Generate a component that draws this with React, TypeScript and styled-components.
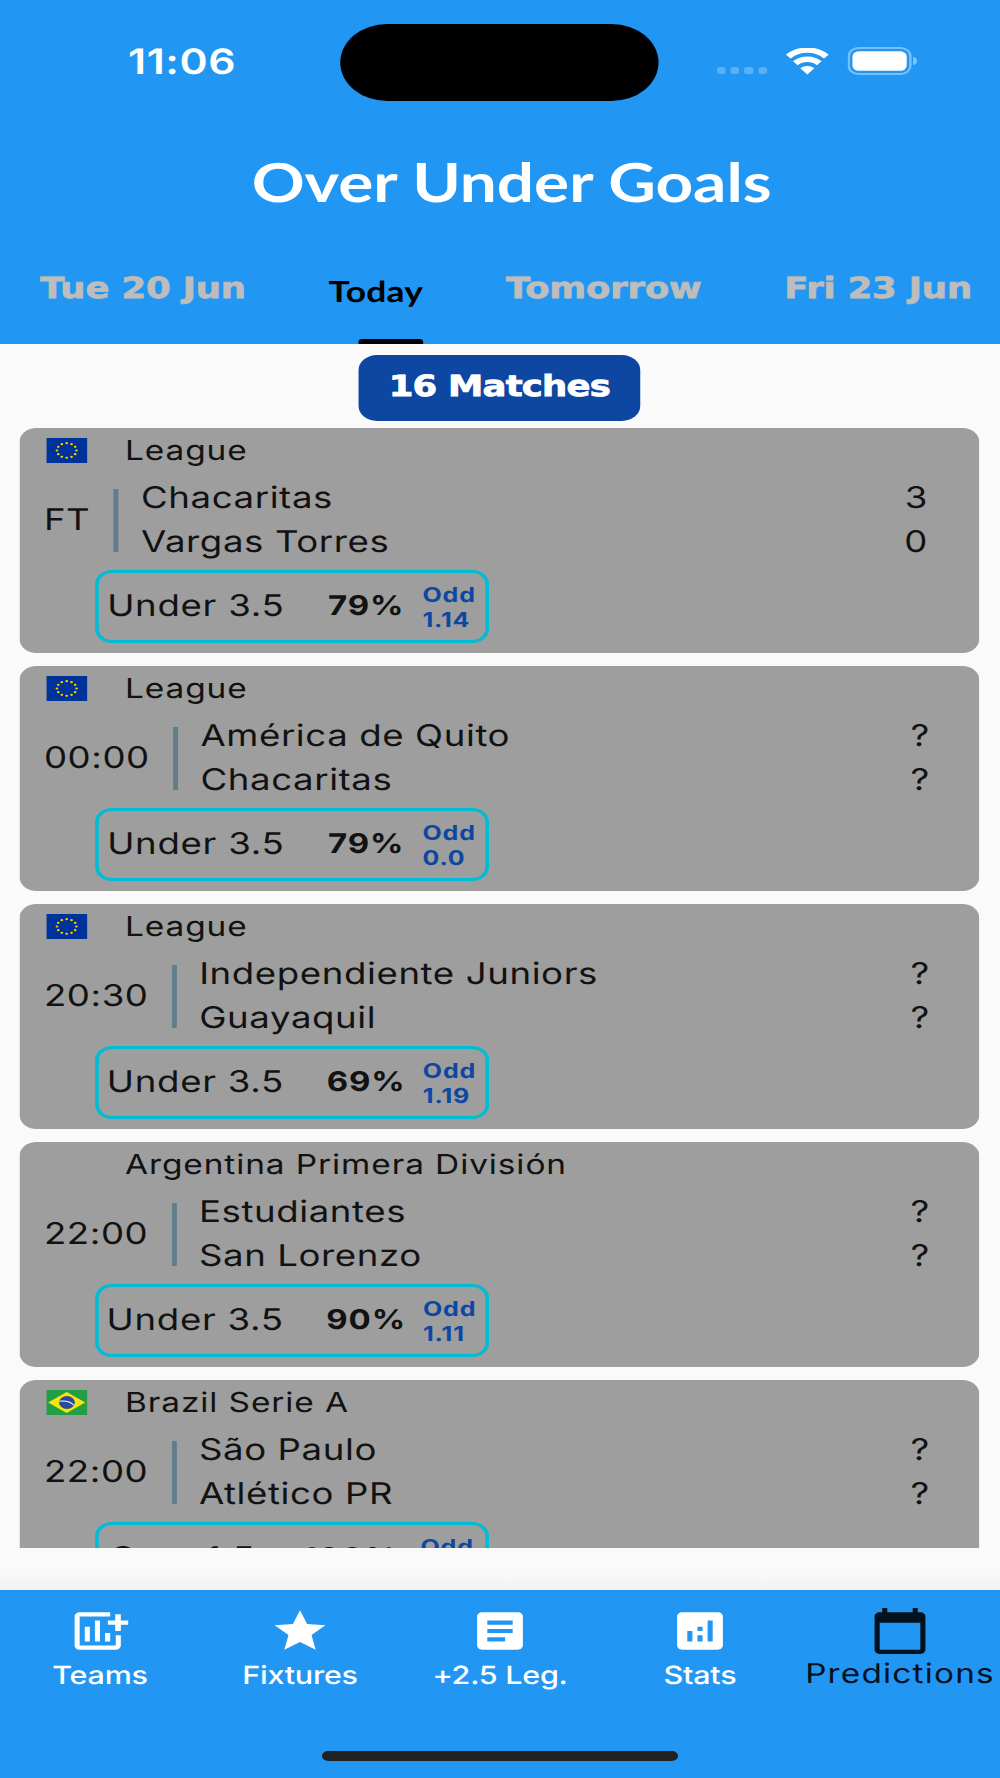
import React from "react"
import styled, { createGlobalStyle } from "styled-components"
import { MdStar, MdArticle, MdAnalytics, MdCalendarToday } from "react-icons/md"

const days = ["Tue 20 Jun", "Today", "Tomorrow", "Fri 23 Jun"]

const matches = [
  {
    flag: "eu",
    league: "League",
    time: "FT",
    home: "Chacaritas",
    away: "Vargas Torres",
    score: ["3", "0"],
    tip: "Under 3.5",
    chance: "79%",
    odd: "1.14",
  },
  {
    flag: "eu",
    league: "League",
    time: "00:00",
    home: "América de Quito",
    away: "Chacaritas",
    score: ["?", "?"],
    tip: "Under 3.5",
    chance: "79%",
    odd: "0.0",
  },
  {
    flag: "eu",
    league: "League",
    time: "20:30",
    home: "Independiente Juniors",
    away: "Guayaquil",
    score: ["?", "?"],
    tip: "Under 3.5",
    chance: "69%",
    odd: "1.19",
  },
  {
    flag: "",
    league: "Argentina Primera División",
    time: "22:00",
    home: "Estudiantes",
    away: "San Lorenzo",
    score: ["?", "?"],
    tip: "Under 3.5",
    chance: "90%",
    odd: "1.11",
  },
  {
    flag: "br",
    league: "Brazil Serie A",
    time: "22:00",
    home: "São Paulo",
    away: "Atlético PR",
    score: ["?", "?"],
    tip: "Over 1.5",
    chance: "100%",
    odd: "1.01",
  },
]

const AddChart = ({ size }: { size: number }) => (
  <svg width={size} height={size} viewBox="0 0 24 24" fill="currentColor">
    <path d="M16 3H4a2 2 0 0 0-2 2v14a2 2 0 0 0 2 2h14.2a2 2 0 0 0 2-2v-5h-2v5H4V5h12z" />
    <path d="M6 10h2v7H6zM10 7h2v10h-2zM14 13h2v4h-2z" />
    <path d="M18 4h2.2v3h2.9v2h-2.9v3H18V9h-2.9V7H18z" />
  </svg>
)

const navItems = [
  { label: "Teams", icon: AddChart },
  { label: "Fixtures", icon: MdStar },
  { label: "+2.5 Leg.", icon: MdArticle },
  { label: "Stats", icon: MdAnalytics },
  { label: "Predictions", icon: MdCalendarToday, active: true },
]

const EuFlag = () => (
  <svg width="33.5" height="25" viewBox="0 0 33.5 25">
    <rect width="33.5" height="25" fill="#039" />
    {Array.from({ length: 12 }, (_, i) => {
      const angle = (i * Math.PI) / 6
      return (
        <circle
          key={i}
          cx={16.7 + 8 * Math.sin(angle)}
          cy={12.5 - 7.3 * Math.cos(angle)}
          r="1.1"
          fill="#fc0"
        />
      )
    })}
  </svg>
)

const BrFlag = () => (
  <svg width="33.5" height="25" viewBox="0 0 33.5 25">
    <rect width="33.5" height="25" fill="#229e45" />
    <path d="M1.5 12.5 16.7 2l15.2 10.5L16.7 23z" fill="#f8e509" />
    <circle cx="16.9" cy="12.5" r="6.5" fill="#2b49a3" />
    <path
      d="M10.8 11.2c4.5-.8 9 .7 12 4"
      fill="none"
      stroke="#ffffef"
      strokeWidth="0.9"
    />
  </svg>
)

const Wifi = () => (
  <svg width="36" height="27" viewBox="0 0 36 27">
    <g fill="none" stroke="#fff">
      <path d="M2.4 8.6a22 22 0 0 1 31.2 0" strokeWidth="5.4" />
      <path d="M8.2 15.2a14 14 0 0 1 19.6 0" strokeWidth="5.4" />
    </g>
    <path d="M12.2 20.2a8.5 8.5 0 0 1 11.6 0L18 26.4z" fill="#fff" />
  </svg>
)

const Battery = () => (
  <svg width="58" height="28" viewBox="0 0 58 28">
    <rect
      x="1"
      y="1"
      width="50.5"
      height="26"
      rx="8"
      fill="none"
      stroke="#fff"
      strokeOpacity="0.4"
      strokeWidth="2"
    />
    <rect x="4" y="4.3" width="44.5" height="19.4" rx="5.2" fill="#fff" />
    <path d="M53.8 9.7q3.2 1.4 3.2 4.3t-3.2 4.3z" fill="#fff" opacity="0.45" />
  </svg>
)

const App = () => (
  <>
    <GlobalStyle />
    <Screen>
      <Header>
        <StatusBar>
          <Clock>11:06</Clock>
          <Island />
          <Indicators>
            <Signal>
              <i />
              <i />
              <i />
              <i />
            </Signal>
            <Wifi />
            <Battery />
          </Indicators>
        </StatusBar>
        <Title>Over Under Goals</Title>
        <Tabs>
          {days.map(day => (
            <Tab key={day} $active={day === "Today"}>
              {day}
            </Tab>
          ))}
        </Tabs>
      </Header>
      <Content>
        <Count>16 Matches</Count>
        <List>
          {matches.map((match, i) => (
            <Card key={i}>
              <League>
                <Flag>
                  {match.flag === "eu" && <EuFlag />}
                  {match.flag === "br" && <BrFlag />}
                </Flag>
                {match.league}
              </League>
              <Game>
                <span>{match.time}</span>
                <Divider />
                <Teams>
                  <p>{match.home}</p>
                  <p>{match.away}</p>
                </Teams>
                <Score $open={match.score[0] === "?"}>
                  <p>{match.score[0]}</p>
                  <p>{match.score[1]}</p>
                </Score>
              </Game>
              <Prediction>
                <Tip>{match.tip}</Tip>
                <Chance>{match.chance}</Chance>
                <Odd>
                  <p>Odd</p>
                  <p>{match.odd}</p>
                </Odd>
              </Prediction>
            </Card>
          ))}
        </List>
      </Content>
      <BottomBar>
        <Nav>
          {navItems.map(({ label, icon: Icon, active }) => (
            <NavItem key={label} $active={active}>
              <Icon size={50} />
              <span>{label}</span>
            </NavItem>
          ))}
        </Nav>
        <HomeIndicator />
      </BottomBar>
    </Screen>
  </>
)

const GlobalStyle = createGlobalStyle`
  * {
    box-sizing: border-box;
    margin: 0;
    padding: 0;
  }
  body {
    width: 1000px;
    height: 1778px;
    overflow: hidden;
    background: #fafafa;
  }
`

/* 820 wide phone layout, widened to fill the 1000px page */
const Screen = styled.div`
  width: 820px;
  height: 1778px;
  display: flex;
  flex-direction: column;
  overflow: hidden;
  background: #fafafa;
  color: #121212;
  font-family: Inter, "Liberation Sans", sans-serif;
  text-rendering: geometricPrecision;
  white-space: nowrap;
  transform: scaleX(1.21951);
  transform-origin: 0 0;
  svg {
    display: block;
  }
`
const Header = styled.header`
  height: 344px;
  flex: none;
  background: #2196f3;
  display: flex;
  flex-direction: column;
`
const StatusBar = styled.div`
  height: 124px;
  display: grid;
  grid-template-columns: 279px 261px 280px;
  align-items: center;
`
const Clock = styled.span`
  padding-left: 105px;
  font-size: 35px;
  font-weight: 600;
  letter-spacing: 0.5px;
  color: #fff;
`
const Island = styled.div`
  height: 77px;
  border-radius: 39px;
  background: #000;
`
const Indicators = styled.div`
  display: flex;
  align-items: center;
  padding-left: 48px;
  padding-bottom: 2px;
  svg:first-of-type {
    margin: 0 15px;
  }
`
const Signal = styled.div`
  display: flex;
  gap: 4px;
  padding-top: 19px;
  i {
    width: 7.2px;
    height: 7px;
    border-radius: 2.5px;
    background: rgba(255, 255, 255, 0.25);
  }
`
const Title = styled.h1`
  height: 118px;
  padding: 23px 0 0 19px;
  text-align: center;
  font-family: Lato, sans-serif;
  font-size: 53.8px;
  line-height: 70px;
  font-weight: 700;
  color: #fff;
`
const Tabs = styled.nav`
  height: 102px;
  display: flex;
  justify-content: space-between;
  padding: 0 23px 0 33px;
`
const Tab = styled.a<{ $active?: boolean }>`
  display: flex;
  flex-direction: column;
  justify-content: space-between;
  font-family: ${props => (props.$active ? "Lato" : '"DejaVu Sans"')},
    sans-serif;
  font-size: 29px;
  font-weight: 700;
  line-height: 40px;
  padding-top: ${props => (props.$active ? "30px" : "26px")};
  letter-spacing: ${props => (props.$active ? "0.2px" : "-0.1px")};
  -webkit-text-stroke: ${props => (props.$active ? "0" : "0.8px")};
  color: ${props => (props.$active ? "#000" : "#bdbdbd")};
  &::after {
    content: "";
    display: ${props => (props.$active ? "block" : "none")};
    align-self: flex-end;
    width: 53px;
    height: 5px;
    border-radius: 3px 3px 0 0;
    background: #000;
  }
`
const Content = styled.main`
  height: 1246px;
  display: flex;
  flex-direction: column;
  align-items: center;
  padding-top: 11px;
  background: linear-gradient(#fafafa 1226px, #f2f2f2);
`
const Count = styled.div`
  width: 231px;
  height: 66px;
  flex: none;
  margin-right: 1px;
  border-radius: 15px;
  background: #0d47a1;
  color: #fff;
  text-align: center;
  font-family: "DejaVu Sans", sans-serif;
  font-size: 29px;
  font-weight: 700;
  line-height: 63px;
  letter-spacing: -0.6px;
  -webkit-text-stroke: 0.8px;
`
const List = styled.section`
  width: 787px;
  height: 1120px;
  margin: 7px 1px 0 0;
  overflow: hidden;
`
const Card = styled.article`
  height: 225px;
  margin-bottom: 13px;
  border-radius: 14px;
  background: #9e9e9e;
  overflow: hidden;
`
const League = styled.header`
  height: 44px;
  display: flex;
  align-items: center;
  padding-left: 22px;
  font-size: 27.4px;
  letter-spacing: 0.75px;
`
const Flag = styled.div`
  width: 64.5px;
  padding-top: 1px;
`
const Game = styled.div`
  height: 96px;
  display: flex;
  align-items: center;
  padding: 0 39.5px 0 20px;
  font-size: 30px;
  line-height: 44px;
  letter-spacing: 0.5px;
`
const Divider = styled.div`
  width: 4px;
  height: 63px;
  margin: 0 18.5px 0 19px;
  background: #607d8b;
`
const Teams = styled.div`
  flex: 1;
`
const Score = styled.div<{ $open: boolean }>`
  text-align: right;
  margin-right: ${props => (props.$open ? "1px" : "2.5px")};
`
const Prediction = styled.div`
  width: 323px;
  height: 73px;
  margin: 1.5px 0 0 61.5px;
  display: flex;
  align-items: center;
  justify-content: space-around;
  border: 3px solid #00bcd4;
  border-radius: 14px;
`
const Tip = styled.span`
  font-size: 30px;
  letter-spacing: 0.6px;
  margin-right: 21px;
`
const Chance = styled.span`
  font-size: 27px;
  font-weight: 700;
  letter-spacing: 0.8px;
  margin-bottom: 1px;
`
const Odd = styled.div`
  font-size: 20.5px;
  font-weight: 700;
  line-height: 25px;
  letter-spacing: 0.7px;
  padding-top: 1px;
  color: #0d47a1;
`
const BottomBar = styled.footer`
  height: 188px;
  background: #2196f3;
`
const Nav = styled.nav`
  display: grid;
  grid-template-columns: repeat(5, 1fr);
  height: 161px;
  padding-top: 16px;
`
const NavItem = styled.a<{ $active?: boolean }>`
  display: flex;
  flex-direction: column;
  align-items: center;
  color: ${props => (props.$active ? "#04121d" : "#fff")};
  font-size: ${props => (props.$active ? "27.3px" : "25px")};
  font-weight: ${props => (props.$active ? 400 : 500)};
  letter-spacing: ${props => (props.$active ? "1px" : "-0.2px")};
  line-height: 36px;
  span {
    margin-top: ${props => (props.$active ? "0" : "2px")};
  }
`
const HomeIndicator = styled.div`
  width: 292px;
  height: 10px;
  margin: 0 auto;
  border-radius: 5px;
  background: #212121;
`

export default App
